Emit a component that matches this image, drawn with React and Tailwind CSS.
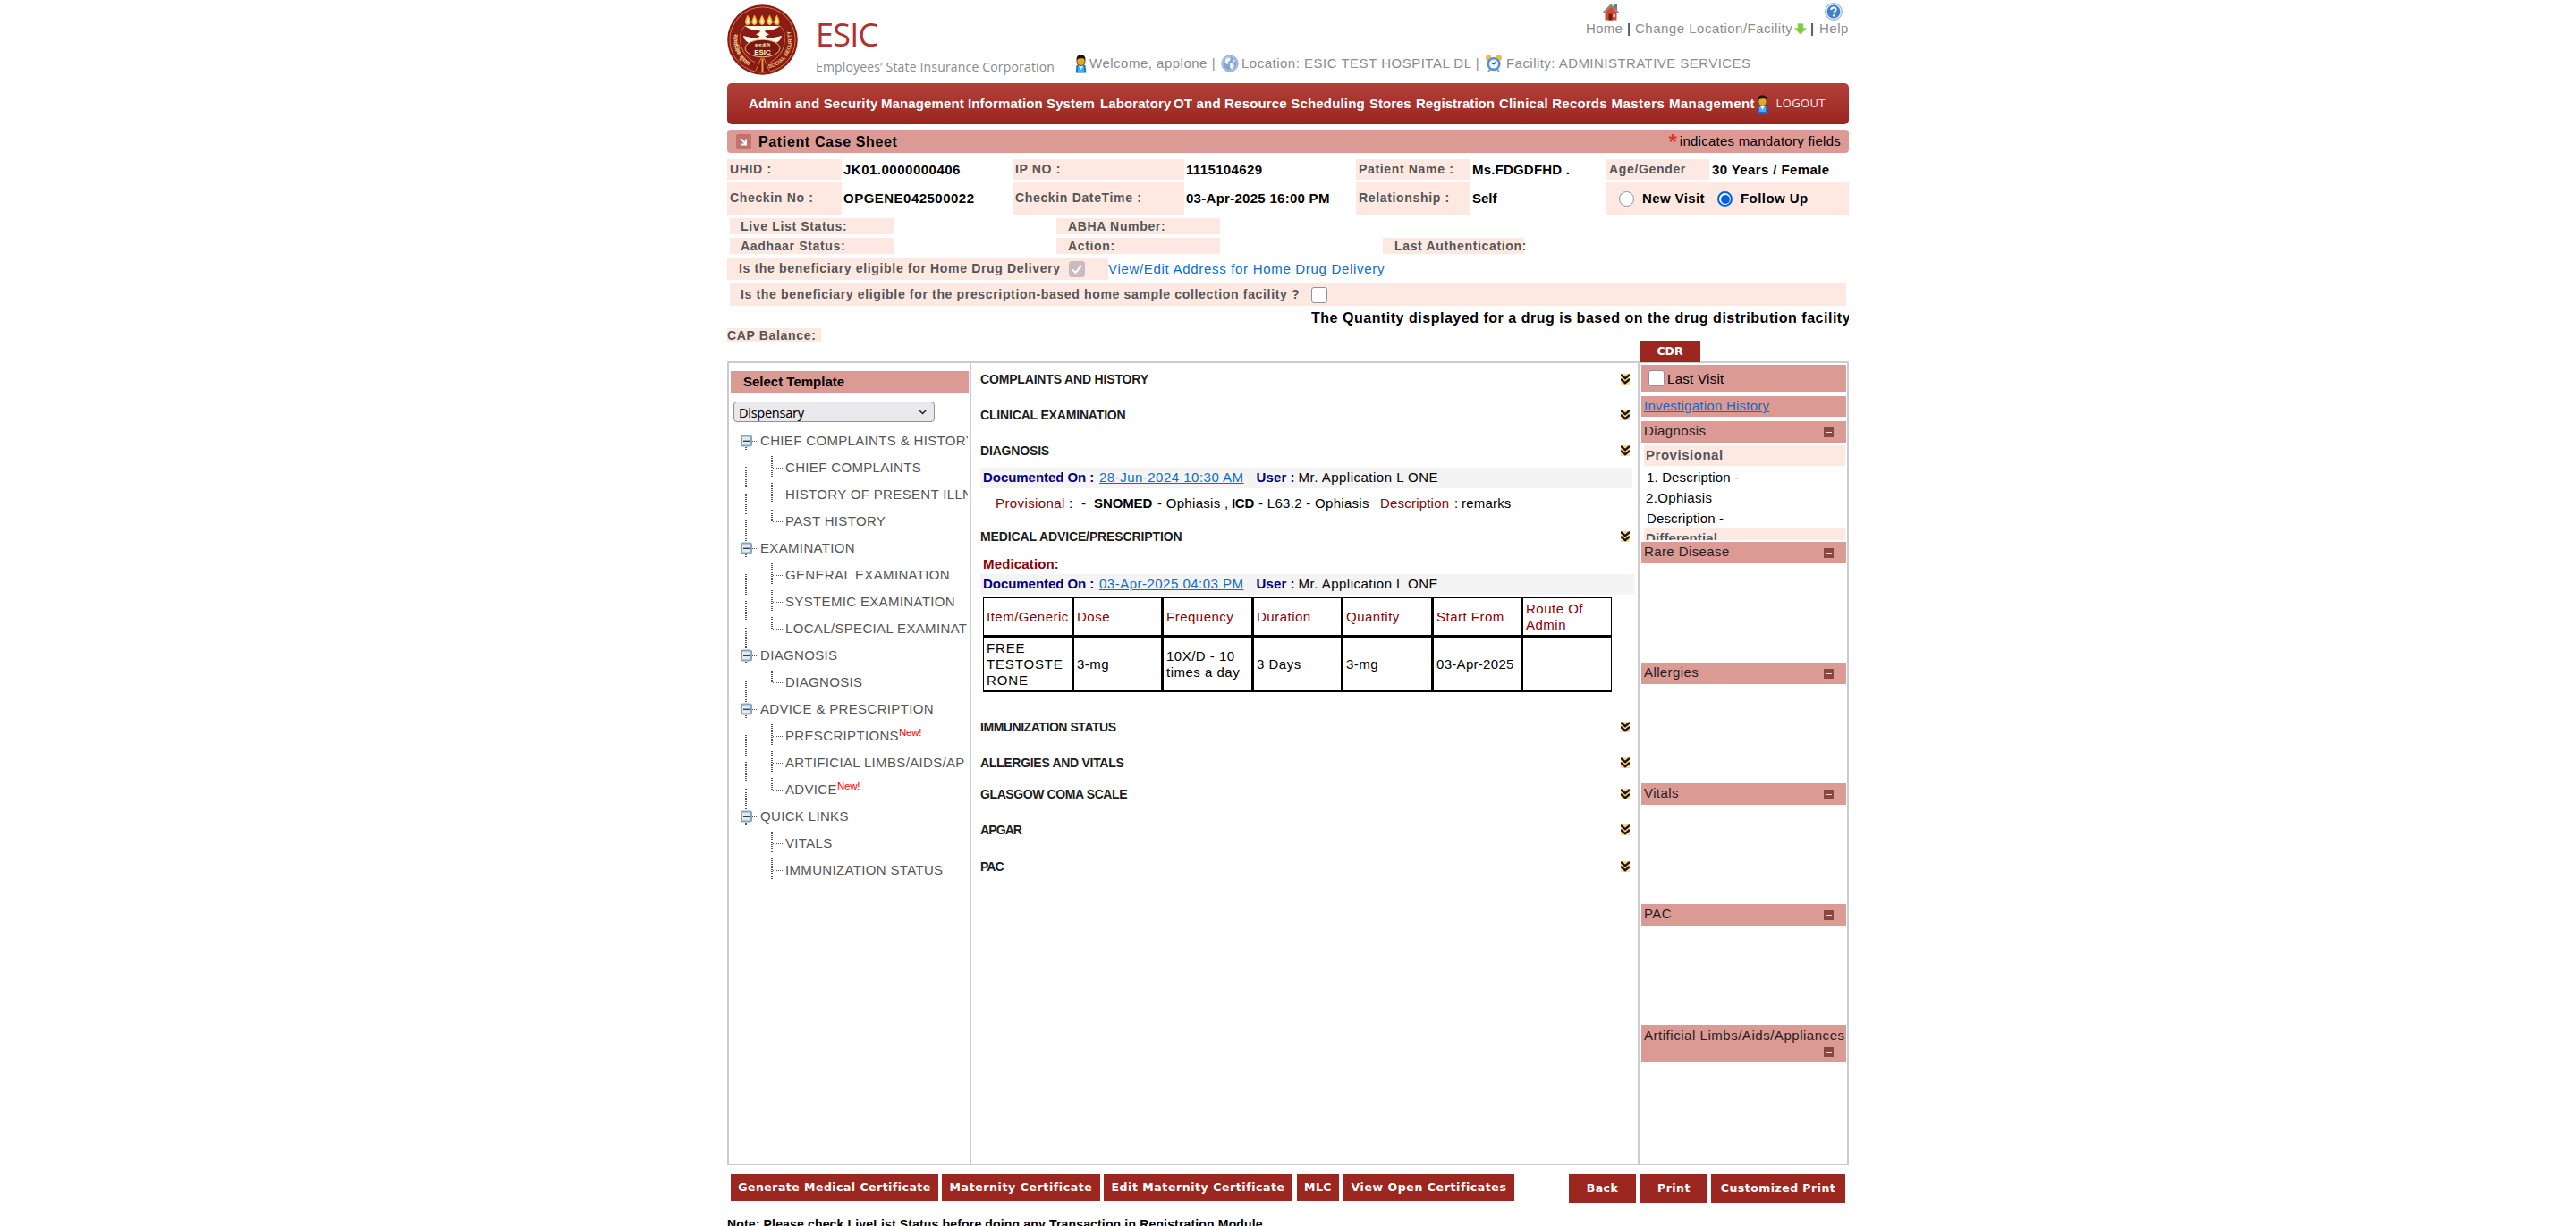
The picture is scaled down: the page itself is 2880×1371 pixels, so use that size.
const cx = (...a) => a.filter(Boolean).join(" ");

/* ---------- drawings ---------- */

function Emblem() {
  return (
    <svg viewBox="0 0 79 79" className="h-[79px] w-[79px] shrink-0">
      <defs>
        <path id="arcRight" d="M46.5 71.5 A32.5 32.5 0 0 0 71 31" />
        <path id="arcLeft" d="M8 33 A32.5 32.5 0 0 0 34 72" />
      </defs>
      <circle cx="39.5" cy="39.5" r="39.3" fill="#8a1c17" />
      <circle cx="39.5" cy="39.5" r="36.6" fill="none" stroke="#d98a3d" strokeWidth="0.9" />
      <path d="M15 36 C13 12 66 12 64 36 C66 52 55 61 48 65 M15 36 C13 52 24 61 31 65" fill="none" stroke="#d98a3d" strokeWidth="0.9" />
      {[23, 30.5, 39, 47.5, 55.5].map((x) => (
        <g key={x}>
          <path d={`M${x} 11.500 q3.800 6.500 2.800 9.500 q-2.800 4 -5.600 0 q-1 -3 2.800 -9.500z`} fill="#f7b733" />
          <path d={`M${x} 14.500 q1.900 4 1.300 6 q-1.300 2 -2.600 0 q-.6 -2 1.300 -6z`} fill="#fff6c4" />
        </g>
      ))}
      <path d="M20 24 H59 C54 28.500 47 29 42.500 28.500 V31 L47 33.500 L42.500 35.500 C44 38 50 38 61 35 C60 41 55 43.500 50 44 H29 C24 43.500 19 41 18 35 C29 38 35 38 36.500 35.500 L32 33.500 L36.500 31 V28.500 C32 29 25 28.500 20 24z" fill="#fffbe6" />
      <ellipse cx="39.500" cy="49" rx="19.500" ry="9.800" fill="#7d1713" stroke="#f1d27a" strokeWidth="0.9" />
      <text x="39.500" y="47" textAnchor="middle" fontSize="4" fontWeight="700" fill="#fff3c0" fontFamily="Noto Sans, sans-serif">क.रा.बी.नि</text>
      <text x="39.500" y="56" textAnchor="middle" fontSize="8" fontWeight="700" fill="#fff3c0" fontFamily="Liberation Sans, sans-serif">ESIC</text>
      <path d="M32 74 L38 60 H41 L47 74" fill="#7d1713" stroke="#d98a3d" strokeWidth="0.9" />
      <path d="M39.500 61 V75" stroke="#e8a03a" strokeWidth="2" />
      <text fontSize="6" fontWeight="700" fill="#efc987" fontFamily="Liberation Sans, sans-serif">
        <textPath href="#arcRight">SOCIAL SECURITY</textPath>
      </text>
      <text fontSize="6.500" fontWeight="700" fill="#efc987" fontFamily="Noto Sans, sans-serif">
        <textPath href="#arcLeft">सामाजिक सुरक्षा</textPath>
      </text>
    </svg>
  );
}

function UserIcon({ className }) {
  return (
    <svg viewBox="0 0 13 21" className={cx("h-[21px] w-[13px] shrink-0", className)}>
      <path d="M1.500 12 h10 l.8 8.500 h-11.600z" fill="#1474dc" />
      <path d="M3 13.500 h7 v5.500 h-7z" fill="#3fb0fa" />
      <path d="M3.500 12 h6 l-3 5z" fill="#eaf6ff" />
      <rect x="2" y="2.500" width="9" height="10" rx="4" fill="#e3a72b" stroke="#5b3a05" strokeWidth="0.9" />
      <path d="M1.600 6.500 C1.200 1 4 .4 6.500 .4 S11.800 1 11.400 6.500 C10.500 4.500 9 4 6.500 4.300 S2.500 4.500 1.600 6.500z" fill="#1d1405" />
    </svg>
  );
}

function GlobeIcon() {
  return (
    <svg viewBox="0 0 20 20" className="h-5 w-5 shrink-0">
      <circle cx="10" cy="10" r="9.200" fill="#b4c9de" stroke="#7f9dbd" strokeWidth="0.8" />
      <circle cx="10" cy="10" r="7.600" fill="#7ea6ce" />
      <path d="M5 5 q3 -3 6 -1 l-1 3 -2 1 1 2 -2 1 -2.500 -2z M10 9 l4 1 1 3 -3 4 -2 -3z M13 4 l3 3 -1 2 -2 -2z" fill="#eef4fa" />
    </svg>
  );
}

function ClockIcon() {
  return (
    <svg viewBox="0 0 20 20" className="h-5 w-5 shrink-0">
      <circle cx="4.200" cy="3.800" r="3.200" fill="#f0bd42" />
      <circle cx="15.800" cy="3.800" r="3.200" fill="#f0bd42" />
      <path d="M4 19.500 l2.500 -4 M16 19.500 l-2.500 -4" stroke="#9aa0a8" strokeWidth="2" />
      <circle cx="10" cy="10.600" r="7.600" fill="#4f93d8" />
      <circle cx="10" cy="10.600" r="5" fill="#f2f7fc" />
      <path d="M10 11 L12.500 8 M10 11 L8 9.800" stroke="#30506f" strokeWidth="1.200" />
    </svg>
  );
}

function HomeIcon() {
  return (
    <svg viewBox="0 0 20 20" className="h-5 w-5">
      <path d="M14 2 h3 v6 h-3z" fill="#777" />
      <path d="M3.500 10 L10 4 L16.500 10 V19.500 H3.500z" fill="#d9482e" />
      <path d="M10 1 L19.500 11 L17.500 12 L10 4.800 L2.500 12 L.5 11z" fill="#8b8b8b" />
      <path d="M7.500 12.500 h4 v7 h-4z" fill="#6d1d12" />
      <path d="M12.500 13 h2.500 v3 h-2.500z" fill="#f6d6c8" />
    </svg>
  );
}

function HelpIcon() {
  return (
    <svg viewBox="0 0 20 20" className="h-5 w-5">
      <circle cx="10" cy="10" r="9.400" fill="#dfe9f3" stroke="#8fa9c4" strokeWidth="1" />
      <circle cx="10" cy="10" r="7.400" fill="#3f83cb" />
      <path d="M7.300 8 C7.300 4.600 12.800 4.600 12.600 7.800 C12.500 9.600 10.100 9.800 10.100 12" fill="none" stroke="#fff" strokeWidth="2" />
      <circle cx="10.100" cy="14.400" r="1.200" fill="#fff" />
    </svg>
  );
}

function DownArrow() {
  return (
    <svg viewBox="0 0 14 13" className="mt-[4px] h-[13px] w-[14px] shrink-0">
      <path d="M4 .5 h6 v5 h3.600 L7 12.500 L.4 5.500 H4z" fill="#7ecb3c" stroke="#a9de7c" strokeWidth="0.8" />
    </svg>
  );
}

function Chevrons() {
  return (
    <svg viewBox="0 0 10 12" className="h-3 w-[10px] bg-[#fbd79a]">
      <path d="M0 1 L5 5.200 L10 1 M0 6 L5 10.200 L10 6" fill="none" stroke="#1d1608" strokeWidth="2.400" />
    </svg>
  );
}

function Minus() {
  return (
    <span className="flex h-[11px] w-[11px] items-center justify-center bg-[#8a4640]">
      <span className="h-px w-[7px] bg-[#f6e4e2]" />
    </span>
  );
}

/* ---------- small controls ---------- */

function Checkbox({ checked, className }) {
  return (
    <span className={cx("flex h-[18px] w-[18px] shrink-0 items-center justify-center rounded-[3px] border", checked ? "border-[#c9bcc0] bg-[#c9bcc0]" : "border-[#8f8f9d] bg-white", className)}>
      {checked && (
        <svg viewBox="0 0 16 16" className="h-4 w-4">
          <path d="M3 8.500 L6.500 12 L13 4" fill="none" stroke="#fff" strokeWidth="2" />
        </svg>
      )}
    </span>
  );
}

function Radio({ checked, className }) {
  return (
    <span className={cx("flex h-[17px] w-[17px] shrink-0 items-center justify-center rounded-full bg-white", checked ? "border-2 border-[#0060df]" : "border border-[#8f8f9d]", className)}>
      {checked && <span className="h-[10px] w-[10px] rounded-full bg-[#0060df]" />}
    </span>
  );
}

function Btn({ children, className }) {
  return (
    <button className={cx("flex shrink-0 items-center justify-center whitespace-nowrap bg-[#9c2721] font-['DejaVu_Sans',sans-serif] text-[12.5px] font-bold text-white", className)}>
      {children}
    </button>
  );
}

const Label = ({ children, className }) => (
  <div className={cx("flex shrink-0 items-center whitespace-nowrap bg-[#fde9e2] text-[14px] font-bold tracking-[0.66px] text-[#555]", className)}>{children}</div>
);

const Value = ({ children, className }) => (
  <div className={cx("flex shrink-0 items-center whitespace-nowrap pt-[2px] text-[15px] font-bold text-black", className)}>{children}</div>
);

/* ---------- tree ---------- */

const TREE = [
  ["CHIEF COMPLAINTS & HISTORY", "parent"],
  ["CHIEF COMPLAINTS", "mid"],
  ["HISTORY OF PRESENT ILLNESS", "mid"],
  ["PAST HISTORY", "last"],
  ["EXAMINATION", "parent"],
  ["GENERAL EXAMINATION", "mid"],
  ["SYSTEMIC EXAMINATION", "mid"],
  ["LOCAL/SPECIAL EXAMINATION", "last"],
  ["DIAGNOSIS", "parent"],
  ["DIAGNOSIS", "last"],
  ["ADVICE & PRESCRIPTION", "parent"],
  ["PRESCRIPTIONS", "mid", true],
  ["ARTIFICIAL LIMBS/AIDS/AP", "mid"],
  ["ADVICE", "last", true],
  ["QUICK LINKS", "parent"],
  ["VITALS", "mid", false, true],
  ["IMMUNIZATION STATUS", "mid", false, true],
];

function TreeRow({ label, kind, isNew, tail }) {
  const parent = kind === "parent";
  return (
    <div className="flex h-[30px] items-center whitespace-nowrap text-[15px] tracking-[0.34px] text-[#555]">
      <svg className={cx("h-[30px] shrink-0 overflow-visible", parent ? "w-[33px]" : "w-[61px]")} fill="none" stroke="#555" strokeDasharray="1 1">
        {parent ? (
          <>
            <path d="M24 15.500 H29" />
            <path d="M17 22 V26" strokeWidth="2" />
            <rect x="12" y="9.500" width="11" height="11" rx="1.500" fill="#e9e9e4" stroke="#7fa6cf" strokeWidth="2" strokeDasharray="none" />
            <path d="M14 15.300 H21" stroke="#333" strokeWidth="1.300" strokeDasharray="none" />
          </>
        ) : (
          <>
            {!tail && <path d="M17 14 V38" strokeWidth="2" />}
            <path d={kind === "last" ? "M46 2 V16" : "M46 2 V26"} strokeWidth="2" />
            <path d="M47 15.500 H58" />
          </>
        )}
      </svg>
      <span>
        {label}
        {isNew && <sup className="-top-[5px] text-[11.5px] tracking-[-0.2px] text-[#f00]">New!</sup>}
      </span>
    </div>
  );
}

/* ---------- centre column ---------- */

const Heading = ({ children, className, spacing = "tracking-[-0.17px]" }) => (
  <div className={cx("flex h-5 items-center justify-between whitespace-nowrap pl-[10px] pr-[9px] text-[14px] font-bold text-[#1c1c1c]", spacing, className)}>
    <span>{children}</span>
    <Chevrons />
  </div>
);

const Documented = ({ date, className }) => (
  <div className={cx("ml-[10px] flex h-[23px] items-center whitespace-nowrap bg-[#f4f4f4] pl-[3px] text-[15px] tracking-[0.49px]", className)}>
    <b className="w-[130px] tracking-[-0.05px] text-[#000080]">Documented On :</b>
    <a className="text-[#0a6cd0] underline">{date}</a>
    <b className="ml-[14px] w-[47px] tracking-[0.1px] text-[#000080]">User :</b>
    <span>Mr. Application L ONE</span>
  </div>
);

const HEADERS = ["Item/Generic", "Dose", "Frequency", "Duration", "Quantity", "Start From", "Route Of Admin"];
const CELLS = ["FREE TESTOSTE RONE", "3-mg", "10X/D - 10 times a day", "3 Days", "3-mg", "03-Apr-2025", ""];

function MedTable() {
  return (
    <div className="ml-[13px] mt-[3px] grid w-[703px] grid-cols-[98px_97px_98px_97px_98px_97px_98px] grid-rows-[41px_59px] gap-[3px] border border-b-2 border-black bg-black text-[15px] leading-[18px]">
      {HEADERS.map((h) => (
        <div key={h} className="flex items-center bg-white pl-[3px] tracking-[0.5px] text-[#8b0000]">{h}</div>
      ))}
      {CELLS.map((c, i) => (
        <div key={i} className={cx("flex items-center bg-white pl-[3px]", i === 0 ? "pr-[6px] tracking-[0.85px]" : i === 5 ? "tracking-[0.3px]" : "tracking-[0.5px]")}>{c}</div>
      ))}
    </div>
  );
}

/* ---------- right column ---------- */

function SideSection({ title, children }) {
  return (
    <div className="h-[135px]">
      <div className="flex h-6 items-center justify-between bg-[#dc9a94] pl-[3px] pr-[14px] text-[#1f1f1f]">
        <span className="-mt-px">{title}</span>
        <Minus />
      </div>
      {children}
    </div>
  );
}

const NAV = [
  ["Admin and Security", "w-[148px] tracking-[0.2px]"],
  ["Management Information System", "w-[245px] tracking-[0.11px]"],
  ["Laboratory", "w-[82px] tracking-[0.1px]"],
  ["OT and Resource Scheduling", "w-[219px] tracking-[0.18px]"],
  ["Stores", "w-[52px] tracking-[0px]"],
  ["Registration", "w-[93px] tracking-[0.04px]"],
  ["Clinical Records", "w-[125.5px] tracking-[0.2px]"],
  ["Masters Management", "w-[163px] tracking-[0.44px]"],
];

export default function App() {
  return (
    <div className="flex h-[1371px] justify-center overflow-hidden bg-white font-['Liberation_Sans',Arial,sans-serif] text-[15px] text-black">
      <div className="flex w-[1254px] flex-col">
        {/* header */}
        <header className="flex h-[93px] shrink-0 text-[#8c8c8c]">
          <div className="flex w-[390px] pt-[5px]">
            <Emblem />
            <div className="ml-5 whitespace-nowrap font-['Open_Sans',sans-serif]">
              <div className="mt-4 h-9 text-[36px] leading-9 tracking-[-0.8px] text-[#b0322f]">ESIC</div>
              <div className="mt-2 h-5 text-[14px] leading-5 tracking-[0.17px] text-[#868b8e]">Employees’ State Insurance Corporation</div>
            </div>
          </div>
          <div className="flex flex-1 flex-col tracking-[0.5px]">
            <div className="flex h-[42px] items-end justify-end whitespace-nowrap leading-5">
              <div className="w-[46px]">
                <div className="mb-[-1px] ml-[18px]"><HomeIcon /></div>
                <div className="tracking-[0.3px]">Home</div>
              </div>
              <span className="w-[9px] text-black">|</span>
              <span className="flex w-[178px]">Change Location/Facility</span>
              <span className="flex h-5 w-[18px] items-start"><DownArrow /></span>
              <span className="w-[10px] text-black">|</span>
              <div className="w-[33px]">
                <div className="mb-[-1px] ml-[6px]"><HelpIcon /></div>
                <div>Help</div>
              </div>
            </div>
            <div className="mt-[19px] flex h-5 items-center whitespace-nowrap">
              <UserIcon className="-ml-px" />
              <span className="ml-[3px] w-[147px]">Welcome, applone |</span>
              <GlobeIcon />
              <span className="ml-[3px] w-[272px]">Location: ESIC TEST HOSPITAL DL |</span>
              <ClockIcon />
              <span className="ml-1 tracking-[0.45px]">Facility: ADMINISTRATIVE SERVICES</span>
            </div>
          </div>
        </header>

        {/* navigation */}
        <nav className="flex h-[46px] shrink-0 items-center whitespace-nowrap rounded-[5px] bg-gradient-to-b from-[#b34039] to-[#992520] pl-6 text-[15px] font-bold text-white">
          {NAV.map(([t, c]) => (
            <span key={t} className={cx("shrink-0", c)}>{t}</span>
          ))}
          <UserIcon className="-ml-px" />
          <span className="ml-[9px] font-['Open_Sans',sans-serif] text-[13px] font-normal tracking-[0.38px] text-[#fbeeee]">LOGOUT</span>
        </nav>

        {/* title */}
        <div className="mt-[6px] flex h-[26px] shrink-0 items-center rounded-[4px] bg-[#dc9a94] pl-[10px] pr-[9px]">
          <svg viewBox="0 0 17 17" className="h-[17px] w-[17px]">
            <rect width="17" height="17" rx="2" fill="#c4716b" />
            <path d="M5 5 L10.500 10.500 M11 5.500 V11.500 H5" fill="none" stroke="#fff" strokeWidth="2" />
          </svg>
          <h1 className="ml-2 pt-px text-[16px] font-bold tracking-[0.64px]">Patient Case Sheet</h1>
          <span className="ml-auto mr-[3px] h-[24px] text-[24px] font-bold leading-[26px] text-[#e03328]">*</span>
          <span className="tracking-[0.26px]">indicates mandatory fields</span>
        </div>

        {/* patient details */}
        <div className="mt-[7px] flex h-[23px] shrink-0">
          <Label className="w-32 pl-[3px]">UHID :</Label>
          <Value className="w-[191px] pl-[2px] tracking-[0.5px]">JK01.0000000406</Value>
          <Label className="w-48 pl-[3px]">IP NO :</Label>
          <Value className="w-48 pl-[2px] tracking-[0.36px]">1115104629</Value>
          <Label className="w-[127px] pl-[3px]">Patient Name :</Label>
          <Value className="w-[153px] pl-[3px] tracking-[0.2px]">Ms.FDGDFHD .</Value>
          <Label className="w-[115px] pl-[3px]">Age/Gender</Label>
          <Value className="pl-[3px] tracking-[0.39px]">30 Years / Female</Value>
        </div>
        <div className="mt-[2px] flex h-[37px] shrink-0">
          <Label className="w-32 pl-[3px]">Checkin No :</Label>
          <Value className="w-[191px] pl-[2px] tracking-[0.48px]">OPGENE042500022</Value>
          <Label className="w-48 pl-[3px]">Checkin DateTime :</Label>
          <Value className="w-48 pl-[2px] tracking-[0.28px]">03-Apr-2025 16:00 PM</Value>
          <Label className="w-[127px] pl-[3px]">Relationship :</Label>
          <Value className="w-[153px] pl-[3px]">Self</Value>
          <div className="flex flex-1 items-center bg-[#fde9e2] pl-[14px] pt-[2px] font-bold">
            <Radio />
            <span className="ml-[9px] w-[84px] whitespace-nowrap tracking-[0.4px]">New Visit</span>
            <Radio checked />
            <span className="ml-[9px] whitespace-nowrap tracking-[0.45px]">Follow Up</span>
          </div>
        </div>
        <div className="ml-[3px] mt-[4px] flex h-[18px] shrink-0">
          <Label className="w-[183px] pl-3">Live List Status:</Label>
          <Label className="ml-[182px] w-[183px] pl-[13px]">ABHA Number:</Label>
        </div>
        <div className="ml-[3px] mt-[4px] flex h-[18px] shrink-0">
          <Label className="w-[183px] pl-3">Aadhaar Status:</Label>
          <Label className="ml-[182px] w-[183px] pl-[13px]">Action:</Label>
          <Label className="ml-[182px] w-[158px] pl-[13px]">Last Authentication:</Label>
        </div>
        <div className="mt-[4px] flex h-[25px] shrink-0 items-center">
          <Label className="h-full w-[426px] pl-[13px]">
            Is the beneficiary eligible for Home Drug Delivery
            <Checkbox checked className="ml-[9px]" />
          </Label>
          <a className="whitespace-nowrap pt-px tracking-[0.69px] text-[#0a6cd0] underline">View/Edit Address for Home Drug Delivery</a>
        </div>
        <Label className="ml-[3px] mr-[3px] mt-[4px] h-[25px] pl-3">
          Is the beneficiary eligible for the prescription-based home sample collection facility ?
          <Checkbox className="ml-[13px]" />
        </Label>
        <div className="ml-[653px] mt-[2px] h-[23px] shrink-0 overflow-hidden whitespace-nowrap text-[16px] font-bold leading-[23px] tracking-[0.52px]">
          The Quantity displayed for a drug is based on the drug distribution facility
        </div>
        <div className="flex h-[37px] shrink-0 items-start justify-between">
          <Label className="h-4 w-[105px]">CAP Balance:</Label>
          <Btn className="relative mr-[166px] mt-[14px] h-6 w-[68px]">CDR</Btn>
        </div>

        {/* work area */}
        <main className="flex h-[899px] shrink-0 border-2 border-b border-[#ccc]">
          <aside className="w-[271px] shrink-0 border-r border-[#ccc] pl-[2px] pt-[9px]">
            <div className="flex h-[25px] w-[266px] items-center bg-[#dc9a94] pl-[14px] font-bold">Select Template</div>
            <div className="ml-[3px] mt-[9px] flex h-[23px] w-[225px] items-center justify-between rounded-[4px] border border-[#8f8f9d] bg-[#e9e9ed] pl-[5px] pr-[7px] font-['Noto_Sans',sans-serif] text-[14.5px] leading-none tracking-[-0.3px]">
              <span className="mt-[2px]">Dispensary</span>
              <svg viewBox="0 0 11 11" className="h-[11px] w-[11px]">
                <path d="M1.500 3.500 L5.500 7.500 L9.500 3.500" fill="none" stroke="#222" strokeWidth="1.500" />
              </svg>
            </div>
            <div className="mt-[6px] w-[265px] overflow-hidden">
              {TREE.map(([label, kind, isNew, tail], i) => (
                <TreeRow key={i} label={label} kind={kind} isNew={isNew} tail={tail} />
              ))}
            </div>
          </aside>

          <section className="w-[745px] shrink-0">
            <Heading className="mt-2">COMPLAINTS AND HISTORY</Heading>
            <Heading className="mt-5">CLINICAL EXAMINATION</Heading>
            <Heading className="mt-5">DIAGNOSIS</Heading>
            <Documented date="28-Jun-2024 10:30 AM" className="mr-[6px] mt-[9px]" />
            <div className="mt-[7px] flex h-5 items-center whitespace-nowrap pl-[27px] tracking-[0.4px]">
              <span className="w-[82px] text-[#8b0000]">Provisional</span>
              <span className="w-[14px]">:</span>
              <span className="w-[14px]">-</span>
              <b className="w-[71px] tracking-[-0.1px]">SNOMED</b>
              <span className="w-[83px] tracking-[0.3px]">- Ophiasis ,</span>
              <b className="w-[30px] tracking-[-0.3px]">ICD</b>
              <span className="w-[136px] tracking-[0.3px]">- L63.2 - Ophiasis</span>
              <span className="w-[83px] tracking-[0.2px] text-[#8b0000]">Description</span>
              <span className="w-[8px]">:</span>
              <span className="tracking-[0.2px]">remarks</span>
            </div>
            <Heading className="mt-[17px]" spacing="tracking-[-0.12px]">MEDICAL ADVICE/PRESCRIPTION</Heading>
            <div className="mt-3 flex h-[18px] items-center pl-[13px] font-bold tracking-[0.15px] text-[#8b0000]">Medication:</div>
            <Documented date="03-Apr-2025 04:03 PM" className="mr-[3px] mt-[2px]" />
            <MedTable />
            <Heading className="mt-[29px]" spacing="tracking-[-0.45px]">IMMUNIZATION STATUS</Heading>
            <Heading className="mt-5" spacing="tracking-[-0.3px]">ALLERGIES AND VITALS</Heading>
            <Heading className="mt-[15px]" spacing="tracking-[-0.4px]">GLASGOW COMA SCALE</Heading>
            <Heading className="mt-5" spacing="tracking-[-0.9px]">APGAR</Heading>
            <Heading className="mt-[21px]" spacing="tracking-[-1px]">PAC</Heading>
          </section>

          <aside className="flex-1 overflow-hidden whitespace-nowrap border-l-2 border-[#ccc] pl-[2px] pr-px pt-[2px]">
            <div className="flex h-[30px] items-center bg-[#dc9a94] pl-2">
              <Checkbox />
              <span className="ml-[3px] mt-[2px] tracking-[0.3px]">Last Visit</span>
            </div>
            <div className="mt-[5px] flex h-[23px] items-center bg-[#dc9a94] pl-[3px] tracking-[0.25px]">
              <a className="text-[#0a6cd0] underline">Investigation History</a>
            </div>
            <div className="mt-[5px] tracking-[0.4px]">
              <SideSection title="Diagnosis">
                <div className="ml-[3px] mr-px mt-[3px] h-[106px] overflow-hidden tracking-[0.15px]">
                  <div className="flex h-[23px] items-center bg-[#fde9e2] pl-[2px] font-bold tracking-[0.53px] text-[#555]">Provisional</div>
                  <div className="mt-[2px] flex h-[23px] items-center pl-[3px]">1. Description -</div>
                  <div className="flex h-[23px] items-center pl-[2px] tracking-[0.35px]">2.Ophiasis</div>
                  <div className="flex h-[22px] items-center pl-[3px]">Description -</div>
                  <div className="flex h-[23px] items-center bg-[#fde9e2] pl-[2px] font-bold text-[#555]">Differential</div>
                </div>
              </SideSection>
              <SideSection title="Rare Disease" />
              <SideSection title="Allergies" />
              <SideSection title="Vitals" />
              <SideSection title="PAC" />
              <div className="flex h-[42px] flex-col items-end bg-[#dc9a94] pl-[3px] pr-[14px] pt-[3px] text-[#1f1f1f]">
                <span className="w-full leading-[18px] tracking-[0.53px]">Artificial Limbs/Aids/Appliances</span>
                <span className="mt-1"><Minus /></span>
              </div>
            </div>
          </aside>
        </main>

        {/* actions */}
        <div className="mt-[10px] flex h-8 shrink-0 items-start pl-1 tracking-[0.47px]">
          <Btn className="h-[30px] w-[232px] tracking-[0.47px]">Generate Medical Certificate</Btn>
          <Btn className="ml-1 h-[30px] w-[177px] tracking-[0.6px]">Maternity Certificate</Btn>
          <Btn className="ml-1 h-[30px] w-[211px] tracking-[0.57px]">Edit Maternity Certificate</Btn>
          <Btn className="ml-[5px] h-[30px] w-[47px] tracking-[0.47px]">MLC</Btn>
          <Btn className="ml-[5px] h-[30px] w-[191px] tracking-[0.59px]">View Open Certificates</Btn>
          <Btn className="ml-[61px] h-8 w-[75px] tracking-[0.47px]">Back</Btn>
          <Btn className="ml-[5px] h-8 w-[75px] tracking-[0.47px]">Print</Btn>
          <Btn className="ml-1 h-8 w-[150px] tracking-[0.47px]">Customized Print</Btn>
        </div>
        <div className="mt-[14px] h-5 shrink-0 whitespace-nowrap text-[14px] font-bold leading-5 tracking-[0.16px]">
          Note: Please check LiveList Status before doing any Transaction in Registration Module.
        </div>
      </div>
    </div>
  );
}
